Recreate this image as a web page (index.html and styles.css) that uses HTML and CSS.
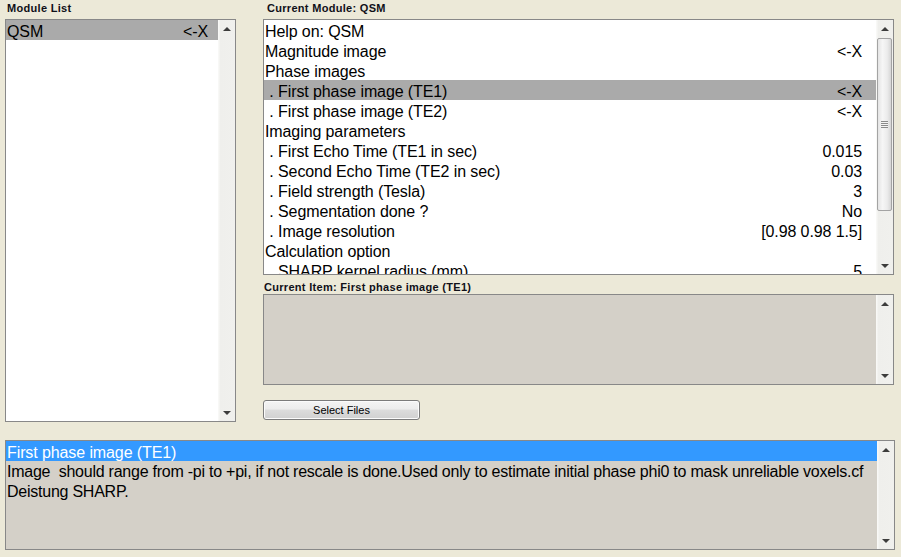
FILE: index.html
```html
<!DOCTYPE html>
<html>
<head>
<meta charset="utf-8">
<link rel="stylesheet" href="styles.css">
</head>
<body>
<div class="app">
  <div class="top">
    <div class="col-left">
      <div class="label label-left">Module List</div>
      <div class="box list-box">
        <div class="rows rows-left">
          <div class="row sel"><span class="name">QSM</span><span class="val">&lt;-X</span></div>
        </div>
        <div class="sb">
          <div class="sb-btn"><span class="arrow up"></span></div>
          <div class="sb-fill"></div>
          <div class="sb-btn"><span class="arrow down"></span></div>
        </div>
      </div>
    </div>
    <div class="col-right">
      <div class="label label-right">Current Module: QSM</div>
      <div class="box module-box">
        <div class="rows rows-right">
          <div class="row"><span class="name">Help on: QSM</span></div>
          <div class="row"><span class="name">Magnitude image</span><span class="val">&lt;-X</span></div>
          <div class="row"><span class="name">Phase images</span></div>
          <div class="row sel"><span class="name"> . First phase image (TE1)</span><span class="val">&lt;-X</span></div>
          <div class="row"><span class="name"> . First phase image (TE2)</span><span class="val">&lt;-X</span></div>
          <div class="row"><span class="name">Imaging parameters</span></div>
          <div class="row"><span class="name"> . First Echo Time (TE1 in sec)</span><span class="val">0.015</span></div>
          <div class="row"><span class="name"> . Second Echo Time (TE2 in sec)</span><span class="val">0.03</span></div>
          <div class="row"><span class="name"> . Field strength (Tesla)</span><span class="val">3</span></div>
          <div class="row"><span class="name"> . Segmentation done ?</span><span class="val">No</span></div>
          <div class="row"><span class="name"> . Image resolution</span><span class="val">[0.98 0.98 1.5]</span></div>
          <div class="row"><span class="name">Calculation option</span></div>
          <div class="row"><span class="name"> . SHARP kernel radius (mm)</span><span class="val">5</span></div>
        </div>
        <div class="sb">
          <div class="sb-btn"><span class="arrow up"></span></div>
          <div class="thumb"><span class="grip"></span></div>
          <div class="sb-fill"></div>
          <div class="sb-btn"><span class="arrow down"></span></div>
        </div>
      </div>
      <div class="label label-item">Current Item: First phase image (TE1)</div>
      <div class="box item-box">
        <div class="rows"></div>
        <div class="sb">
          <div class="sb-btn"><span class="arrow up"></span></div>
          <div class="sb-fill"></div>
          <div class="sb-btn"><span class="arrow down"></span></div>
        </div>
      </div>
      <button class="btn">Select Files</button>
    </div>
  </div>
  <div class="box help-box">
    <div class="rows help-rows">
      <div class="help-title">First phase image (TE1)</div>
      <div class="help-text">Image  should range from -pi to +pi, if not rescale is done.Used only to estimate initial phase phi0 to mask unreliable voxels.cf<br>Deistung SHARP.</div>
    </div>
    <div class="sb">
      <div class="sb-btn"><span class="arrow up"></span></div>
      <div class="sb-fill"></div>
      <div class="sb-btn"><span class="arrow down"></span></div>
    </div>
  </div>
</div>
</body>
</html>
```
FILE: styles.css
```css
* { box-sizing: border-box; }
html, body {
  margin: 0;
  padding: 0;
  background: #ECE9D8;
}
body {
  width: 901px;
  height: 557px;
  overflow: hidden;
  font-family: "Liberation Sans", Arial, sans-serif;
  color: #000;
}
.app {
  padding: 0 6px 0 5px;
}
.top {
  display: flex;
  gap: 27px;
  height: 422px;
}
.col-left {
  width: 231px;
  display: flex;
  flex-direction: column;
}
.col-right {
  width: 631px;
  display: flex;
  flex-direction: column;
}
.label {
  height: 19px;
  line-height: 17px;
  font-size: 11px;
  font-weight: bold;
  letter-spacing: 0.3px;
  color: #101018;
  white-space: nowrap;
}
.label-left { padding-left: 2px; }
.label-right { padding-left: 4px; }
.label-item { padding-left: 1px; padding-top: 4px; }

.box {
  border: 1px solid #888;
  display: flex;
  overflow: hidden;
}
.list-box {
  height: 403px;
  background: #fff;
}
.module-box {
  height: 256px;
  background: #fff;
}
.item-box {
  height: 91px;
  background: #D4D0C8;
}
.help-box {
  margin-top: 18px;
  width: 890px;
  height: 110px;
  background: #D4D0C8;
}
.rows {
  flex: 1;
  min-width: 0;
  overflow: hidden;
}
.row {
  display: flex;
  justify-content: space-between;
  height: 20px;
  line-height: 23px;
  font-size: 16px;
  letter-spacing: -0.1px;
  white-space: pre;
  padding-left: 1px;
}
.rows-left .row { padding-right: 10px; }
.rows-right .row { padding-right: 14px; }
.row.sel { background: #AAAAAA; }

.help-title {
  height: 20px;
  line-height: 23px;
  font-size: 16px;
  letter-spacing: -0.1px;
  background: #3399FF;
  color: #fff;
  padding-left: 1px;
}
.help-text {
  font-size: 16px;
  line-height: 20px;
  padding-top: 1px;
  letter-spacing: -0.24px;
  padding-left: 1px;
  white-space: pre;
}

/* scrollbar */
.sb {
  width: 17px;
  flex: none;
  display: flex;
  flex-direction: column;
  background: linear-gradient(to right, #F8F8F6 0, #F8F8F6 1px, #EFEFEC 2px, #F0F0ED 100%);
}
.sb-btn {
  height: 17px;
  flex: none;
  display: flex;
  align-items: center;
  justify-content: center;
}
.sb-fill { flex: 1; }
.arrow {
  width: 0;
  height: 0;
  border-left: 4px solid transparent;
  border-right: 4px solid transparent;
}
.arrow.up { border-bottom: 4px solid #3c3c3c; margin-top: 1px; }
.arrow.down { border-top: 4px solid #3c3c3c; margin-top: 1px; }
.thumb {
  margin: 1px 1px 0 1px;
  height: 173px;
  border: 1px solid #A3A3A3;
  border-radius: 2px;
  background: linear-gradient(to right, #E4E4E4 0, #F6F6F6 35%, #ECECEC 70%, #D6D6D6 100%);
  display: flex;
  align-items: center;
  justify-content: center;
}
.grip {
  width: 7px;
  height: 7px;
  background: repeating-linear-gradient(to bottom, #8A8A8A 0, #8A8A8A 1px, #F4F4F4 1px, #F4F4F4 2px);
}

.btn {
  margin-top: 15px;
  width: 157px;
  height: 20px;
  padding: 0;
  border: 1px solid #7B7B7B;
  border-radius: 3px;
  background: linear-gradient(to bottom, #F4F4F4 0, #ECECEC 45%, #DCDCDC 50%, #D0D0D0 100%);
  font-family: "Liberation Sans", Arial, sans-serif;
  font-size: 11px;
  color: #000;
  line-height: 17px;
  box-shadow: inset 0 0 0 1px #FBFBFB;
}
```
